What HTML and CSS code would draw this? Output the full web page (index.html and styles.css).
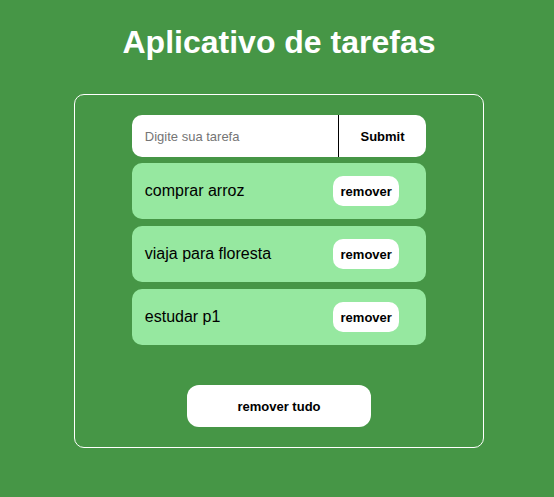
FILE: index.html
```html
<!DOCTYPE html>
<html lang="pt-BR">
<head>
  <meta charset="utf-8">
  <meta name="viewport" content="width=device-width, initial-scale=1">
  <title>Aplicativo de tarefas</title>
  <link rel="stylesheet" href="styles.css">
</head>
<body>
  <main class="app">
    <h1 class="title">Aplicativo de tarefas</h1>
    <section class="panel">
      <form class="task-form">
        <input class="task-input" type="text" placeholder="Digite sua tarefa" aria-label="Digite sua tarefa">
        <button class="submit" type="submit">Submit</button>
      </form>
      <ul class="task-list">
        <li class="task"><span>comprar arroz</span><button class="remove" type="button">remover</button></li>
        <li class="task"><span>viaja para floresta</span><button class="remove" type="button">remover</button></li>
        <li class="task"><span>estudar p1</span><button class="remove" type="button">remover</button></li>
      </ul>
      <button class="remove-all" type="button">remover tudo</button>
    </section>
  </main>
</body>
</html>
```
FILE: styles.css
```css
* {
  box-sizing: border-box;
}

body {
  margin: 0;
  background: #469646;
  color: #000;
  font: 16px/20px "Liberation Sans", Arial, sans-serif;
}

.app {
  display: flex;
  flex-direction: column;
  align-items: center;
  padding: 24px 0 48px 4px;
}

.title {
  margin: 0 0 34px;
  color: #fff;
  font-size: 32px;
  line-height: 36px;
}

.panel {
  display: flex;
  flex-direction: column;
  align-items: center;
  width: 100%;
  max-width: 410px;
  padding: 20px;
  border: 1px solid #fff;
  border-radius: 10px;
}

.task-form,
.task-list {
  width: 80%;
}

.task-form {
  display: flex;
  height: 42px;
}

.task-input {
  flex: 1;
  min-width: 0;
  padding: 0 13px;
  border: 0;
  border-radius: 10px 0 0 10px;
  background: #fff;
  font: 13px "Liberation Sans", Arial, sans-serif;
}

.task-input::placeholder {
  color: #757575;
}

button {
  padding: 0;
  border: 0;
  background: #fff;
  color: #000;
  font: bold 13px "Liberation Sans", Arial, sans-serif;
  cursor: pointer;
}

.submit {
  width: 30%;
  border-left: 1px solid #000;
  border-radius: 0 10px 10px 0;
}

.task-list {
  display: flex;
  flex-direction: column;
  gap: 7px;
  margin: 6px 0 40px;
  padding: 0;
  list-style: none;
}

.task {
  display: flex;
  align-items: center;
  justify-content: space-between;
  height: 56px;
  padding: 0 27px 0 13px;
  border-radius: 10px;
  background: #96e8a0;
}

.remove {
  width: 66px;
  height: 30px;
  border-radius: 10px;
}

.remove-all {
  width: 50%;
  height: 42px;
  border-radius: 12px;
}
```
